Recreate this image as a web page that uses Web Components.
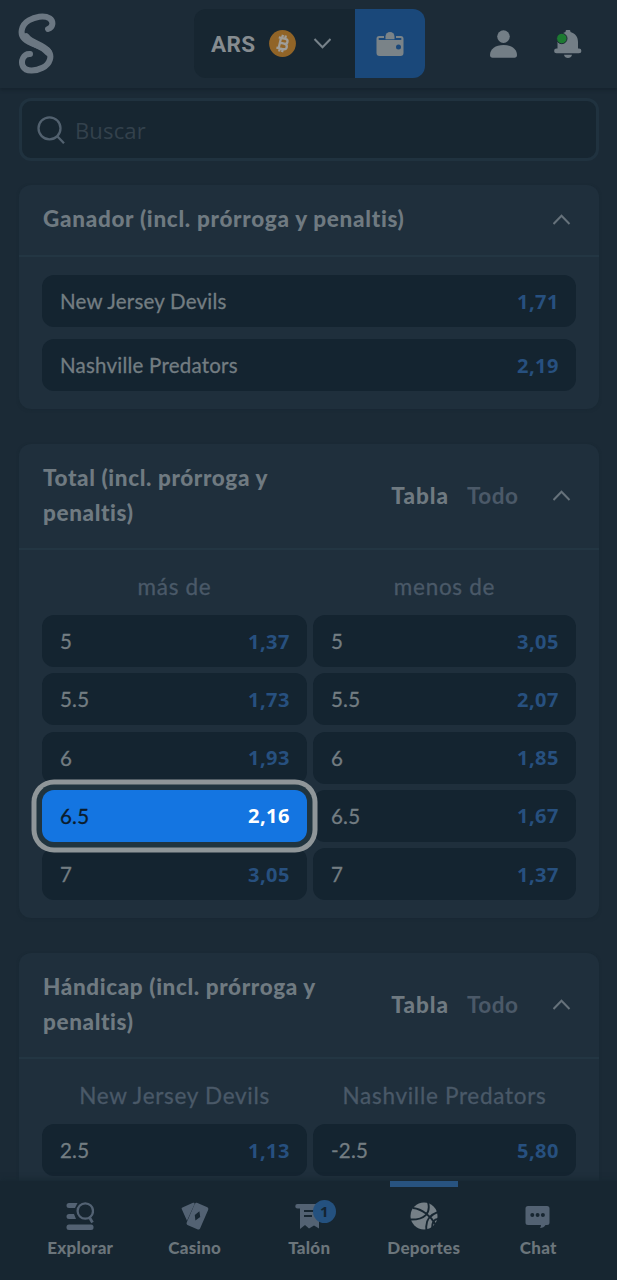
<!DOCTYPE html>
<html lang="es">
<head>
<meta charset="utf-8">
<meta name="viewport" content="width=device-width, initial-scale=1">
<title>Apuestas</title>
<style>
  body {
    margin: 0;
    background: #1b2a36;
    font-family: Lato, "Open Sans", sans-serif;
  }
</style>
</head>
<body>
<bet-app></bet-app>

<script>
const define = (name, html, setup) => {
  const template = document.createElement('template')
  template.innerHTML = html

  customElements.define(name,
    class extends HTMLElement {
      constructor () {
        super()

        this.attachShadow({ mode: 'open' })
          .appendChild(template.content.cloneNode(true))
      }

      connectedCallback () {
        if (setup) setup(this, this.shadowRoot)
      }
    })
}

define('bet-chevron', `
<style>
  :host { display: block; width: 18px; height: 18px; color: #66727b; }
  :host([down]) { transform: rotate(180deg); }
  svg { display: block; }
</style>
<svg width="18" height="18" viewBox="0 0 18 18" fill="none" stroke="currentColor" stroke-width="2"><path d="M.5 14 8.500 5.800l8 8.200"/></svg>
`)

define('bet-header', `
<style>
  :host {
    display: flex;
    align-items: center;
    box-sizing: border-box;
    height: 88px;
    padding: 0 35px 1px 18px;
    background: #1c2b37;
    box-shadow: 0 2px 3px #16232e;
    position: relative;
  }
  .logo { width: 38px; margin-right: 138px; }
  .wallet { display: flex; height: 69px; }
  .currency {
    display: flex;
    align-items: center;
    box-sizing: border-box;
    width: 161px;
    padding-left: 17px;
    border-radius: 12px 0 0 12px;
    background: #172631;
    color: #868c90;
    font: bold 22.500px Roboto, sans-serif;
  }
  .currency span { width: 58px; letter-spacing: .3px; }
  .currency bet-chevron { margin-left: 17px; color: #77828a; }
  .button {
    display: flex;
    align-items: center;
    justify-content: center;
    width: 70px;
    border-radius: 0 12px 12px 0;
    background: #1a487a;
  }
  .icons { display: flex; gap: 37px; margin-left: auto; }
  svg { display: block; }
</style>
<svg class="logo" width="38" height="62" viewBox="0 0 38 62" fill="none" stroke="#6b7782" stroke-linecap="round" stroke-linejoin="round">
  <path stroke-width="6" d="M30 16C35 14.500 36 8.500 31.500 5.300C26 1.800 16.500 4 11 7.300C3 12 1.500 21 6.500 26C12 31.500 23 32.500 29.500 37.500C35 42.500 32 51 24.500 54.800C17.500 58.500 8 59 5 53.500C2.300 48 5.500 40.500 12 41"/>
  <path stroke-width="7.500" d="M8 24C13 31 25 32 30 39"/>
</svg>
<div class="wallet">
  <div class="currency">
    <span>ARS</span>
    <svg width="27" height="27" viewBox="0 0 27 27">
      <circle cx="13.500" cy="13.500" r="13.400" fill="#916427"/>
      <g transform="rotate(13 13.500 13.500)" fill="none" stroke="#9f9d98" stroke-width="2.300">
        <path d="M8.500 8.300h6.700c3.700 0 3.700 5 0 5h-4.500M15 13.300c4.600 0 4.600 5.600 0 5.600H8.500M10.800 8v11M12 5v3M15 5v3M12 19v3M15 19v3"/>
      </g>
    </svg>
    <bet-chevron down></bet-chevron>
  </div>
  <div class="button">
    <svg width="28" height="26" viewBox="0 0 28 26">
      <path fill="#7a8388" fill-rule="evenodd" d="M3.500 5H8v2H3.500a1 1 0 0 0 0 2h21a1 1 0 0 0 0-2H20V5h4.500A2.500 2.500 0 0 1 27.500 7.500V22a3 3 0 0 1-3 3H3.500a3 3 0 0 1-3-3V7.500A2.500 2.500 0 0 1 3.500 5Zm19 8.500a2.500 2.500 0 1 0 0 5 2.500 2.500 0 0 0 0-5Z"/>
      <path fill="#7a8388" d="M9.500 8.300V5.500a4.500 4.500 0 1 1 9 0v2.800Z"/>
    </svg>
  </div>
</div>
<div class="icons">
  <svg width="27" height="28" viewBox="0 0 27 28" fill="#737e86">
    <circle cx="13.500" cy="6.600" r="6.300"/>
    <path d="M0 25c0-6 5.500-10 13.500-10S27 19 27 25c0 2-1 2.700-2.500 2.700h-22C1 27.700 0 27 0 25Z"/>
  </svg>
  <svg width="28" height="28" viewBox="0 0 28 28">
    <path fill="#737e86" d="M11.500 2a2.500 2.500 0 0 1 5 0c5 1.500 7.500 5 7.500 10v6.500h1a2.400 2.400 0 0 1 0 4.800H2.500a2.400 2.400 0 0 1 0-4.800h1V12c0-5 3-8.500 8-10ZM10 24.700h8c-.7 4.400-7.300 4.400-8 0Z"/>
    <circle cx="7.800" cy="8.500" r="5.200" fill="#1c7a31" stroke="#1c2b37" stroke-width="1"/>
  </svg>
</div>
`)

define('bet-search', `
<style>
  :host {
    display: flex;
    align-items: center;
    gap: 10px;
    box-sizing: border-box;
    height: 63px;
    padding: 0 0 0 15px;
    border: 3px solid #20323f;
    border-radius: 12px;
    background: #172631;
    color: #33414c;
    font: 22px "Open Sans", sans-serif;
    letter-spacing: .15px;
  }
</style>
<svg width="28" height="28" viewBox="0 0 28 28" fill="none" stroke="#52616f" stroke-width="2.300"><circle cx="12.500" cy="12.300" r="11"/><path d="m20.500 20.500 6.500 6.700"/></svg>
<span><slot></slot></span>
`)

define('bet-market', `
<style>
  :host {
    display: block;
    box-sizing: border-box;
    border-radius: 12px;
    background: #1f2f3c;
    box-shadow: 0 1px 3px #192833;
  }
  header {
    display: flex;
    align-items: center;
    box-sizing: border-box;
    padding: 16px 28.500px 18px 24px;
    border-bottom: 2px solid #233643;
  }
  h2 {
    flex: none;
    margin: 0;
    width: 290px;
    color: #6f7a81;
    font: 900 22.500px/35px Lato, sans-serif;
    letter-spacing: .62px;
  }
  :host([wide]) header { padding-bottom: 19px; }
  :host([wide]) h2 { width: 420px; letter-spacing: .7px; }
  nav { display: flex; gap: 18px; margin-left: auto; margin-right: 34px; font: 900 22.500px Lato, sans-serif; }
  nav span { color: #6f7a81; letter-spacing: 1px; }
  nav span + span { color: #4b5968; font-weight: bold; letter-spacing: .5px; }
  :host([wide]) nav { display: none; }
  bet-chevron { margin-left: auto; }
  nav + bet-chevron { margin-left: 0; }
  :host([wide]) bet-chevron { margin-left: auto; }
  .body { padding: 18px 23px; }
</style>
<header>
  <h2></h2>
  <nav><span>Tabla</span><span>Todo</span></nav>
  <bet-chevron></bet-chevron>
</header>
<div class="body"><slot></slot></div>
`, (host, root) => {
  root.querySelector('h2').textContent = host.getAttribute('heading')
})

define('bet-column', `
<style>
  :host { display: flex; flex-direction: column; gap: 6.250px; min-width: 0; }
  .label {
    height: 47px;
    margin-bottom: -6.250px;
    padding-top: 2px;
    box-sizing: border-box;
    text-align: center;
    color: #4a5968;
    font: 22.500px/34px Lato, sans-serif;
    letter-spacing: .7px;
    -webkit-text-stroke: .3px #4a5968;
  }
</style>
<div class="label"></div>
<slot></slot>
`, (host, root) => {
  root.querySelector('.label').textContent = host.getAttribute('label')
})

define('bet-outcome', `
<style>
  :host {
    display: flex;
    align-items: center;
    justify-content: space-between;
    box-sizing: border-box;
    height: 52px;
    padding: 0 17px 0 18px;
    border-radius: 12px;
    background: #142430;
    color: #737d82;
    font: 20.500px Lato, sans-serif;
    letter-spacing: .22px;
    -webkit-text-stroke: .3px currentColor;
  }
  .odds {
    color: #27507f;
    font: bold 20px "Open Sans", sans-serif;
    letter-spacing: .5px;
    -webkit-text-stroke: 0;
  }
  /* the ring overlaps its neighbours without moving them */
  :host([selected]) {
    position: relative;
    z-index: 1;
    background: #1475e1;
    color: #0b1c2c;
    box-shadow: 0 0 0 5.500px #20343f, 0 0 0 10.500px #8f9699;
  }
  :host([selected]) .odds { color: #fff; }
</style>
<span><slot></slot></span>
<span class="odds"></span>
`, (host, root) => {
  root.querySelector('.odds').textContent = host.getAttribute('odds')
})

define('bet-tab', `
<style>
  :host {
    display: flex;
    flex-direction: column;
    align-items: center;
    flex: 1;
    position: relative;
    padding-top: 20px;
    color: #6b757b;
    font: 900 17px/24px Lato, sans-serif;
    letter-spacing: .25px;
    --icon: #536273;
  }
  :host([active]) { --icon: #768087; }
  :host([active])::before {
    content: "";
    position: absolute;
    top: 0;
    width: 68px;
    height: 6px;
    background: #285380;
  }
  .icon { height: 30px; margin-bottom: 5px; display: flex; align-items: center; }
  .badge {
    position: absolute;
    top: 19px;
    left: 61px;
    width: 23px;
    border-radius: 50%;
    background: #24517f;
    color: #142431;
    font: bold 15px/23px "Open Sans", sans-serif;
    text-align: center;
  }
  .badge:empty { display: none; }
</style>
<div class="icon"><slot name="icon"></slot></div>
<slot></slot>
<div class="badge"></div>
`, (host, root) => {
  root.querySelector('.badge').textContent = host.getAttribute('count') || ''
})

define('bet-tabs', `
<style>
  :host {
    display: flex;
    box-sizing: border-box;
    width: 100%;
    height: 99px;
    padding: 0 21.500px 0 23px;
    background: #172631;
    box-shadow: 0 -2px 5px #182833;
    position: relative;
    z-index: 2;
  }
  svg { display: block; fill: var(--icon); }
</style>
<bet-tab>
  <svg slot="icon" width="28" height="28" viewBox="0 0 28 28">
    <path d="M3 1h8.500L9 6H3a2.500 2.500 0 0 1 0-5Zm0 11h5l2 5H3a2.500 2.500 0 0 1 0-5Z"/>
    <rect x=".5" y="22.500" width="27" height="5.500" rx="2.500"/>
    <g fill="none" stroke="var(--icon)" stroke-width="2.300"><circle cx="19.300" cy="9" r="7.700"/><path d="m23.500 15.500 3 5" stroke-width="2.800"/></g>
  </svg>Explorar
</bet-tab>
<bet-tab>
  <svg slot="icon" width="28" height="28" viewBox="0 0 28 28">
    <path d="M2.500 5 12 .8c1-.4 2 .2 1.500 1.400L6 18.800.7 7C.4 6 1 5.500 2.500 5Z"/>
    <path fill-rule="evenodd" d="m16.500.9 9.300 4c1.400.7 1.900 1.700 1.300 3l-7.800 18c-.6 1.400-1.700 1.900-3 1.300l-9.300-4c-1.400-.6-1.800-1.700-1.200-3l7.800-18c.6-1.300 1.600-1.900 2.900-1.300Zm1.900 8.300-4.600 3.800.6 5.600 4.800-3.600Z"/>
  </svg>Casino
</bet-tab>
<bet-tab count="1">
  <svg slot="icon" width="28" height="28" viewBox="0 0 28 28">
    <path fill-rule="evenodd" d="M2.500 2h23a2.200 2.200 0 0 1 0 4.500H24V26.500l-5-3-5 3-4-3.500-5 4V6.500H2.500a2.200 2.200 0 0 1 0-4.500ZM9 8v2h10V8Zm0 5v2h8v-2Z"/>
  </svg>Talón
</bet-tab>
<bet-tab active>
  <svg slot="icon" width="28" height="28" viewBox="0 0 28 28">
    <circle cx="14" cy="14" r="13.500"/>
    <path fill="none" stroke="#172631" stroke-width="1.900" d="M3 6c9 1 18 8 23 17M18 0c3 11-3 18-18 17.500M28 10c-8 3-13 9-11.500 18M28 17c-4 0-6 4-6 10"/>
  </svg>Deportes
</bet-tab>
<bet-tab>
  <svg slot="icon" width="28" height="28" viewBox="0 0 28 28">
    <path fill-rule="evenodd" d="M4 4h19a2.500 2.500 0 0 1 2.500 2.500v14A2.500 2.500 0 0 1 23 23h-1.500c-1 2-3 3-5.500 3 .8-1 1-2 .9-3H4a2.500 2.500 0 0 1-2.500-2.500v-14A2.500 2.500 0 0 1 4 4Zm4.300 7a2 2 0 1 0 0 4 2 2 0 0 0 0-4Zm5.300 0a2 2 0 1 0 0 4 2 2 0 0 0 0-4Zm5.300 0a2 2 0 1 0 0 4 2 2 0 0 0 0-4Z"/>
  </svg>Chat
</bet-tab>
`)

define('bet-app', `
<style>
  :host { display: flex; flex-direction: column; height: 1280px; overflow: hidden; }
  main {
    flex: 1;
    display: flex;
    flex-direction: column;
    min-height: 0;
    padding: 10px 18px 0 19px;
    overflow: hidden;
  }
  main > * { flex: none; }
  bet-market { margin-bottom: 35px; }
  bet-search { margin-bottom: 24px; }
  .list { display: grid; gap: 12px; }
  .table { display: grid; grid-template-columns: 265px 263px; gap: 6px; }
</style>
<bet-header></bet-header>
<main>
  <bet-search>Buscar</bet-search>
  <bet-market wide heading="Ganador (incl. prórroga y penaltis)">
    <div class="list">
      <bet-outcome odds="1,71">New Jersey Devils</bet-outcome>
      <bet-outcome odds="2,19">Nashville Predators</bet-outcome>
    </div>
  </bet-market>
  <bet-market heading="Total (incl. prórroga y penaltis)">
    <div class="table">
      <bet-column label="más de">
        <bet-outcome odds="1,37">5</bet-outcome>
        <bet-outcome odds="1,73">5.5</bet-outcome>
        <bet-outcome odds="1,93">6</bet-outcome>
        <bet-outcome odds="2,16" selected>6.5</bet-outcome>
        <bet-outcome odds="3,05">7</bet-outcome>
      </bet-column>
      <bet-column label="menos de">
        <bet-outcome odds="3,05">5</bet-outcome>
        <bet-outcome odds="2,07">5.5</bet-outcome>
        <bet-outcome odds="1,85">6</bet-outcome>
        <bet-outcome odds="1,67">6.5</bet-outcome>
        <bet-outcome odds="1,37">7</bet-outcome>
      </bet-column>
    </div>
  </bet-market>
  <bet-market heading="Hándicap (incl. prórroga y penaltis)">
    <div class="table">
      <bet-column label="New Jersey Devils">
        <bet-outcome odds="1,13">2.5</bet-outcome>
      </bet-column>
      <bet-column label="Nashville Predators">
        <bet-outcome odds="5,80">-2.5</bet-outcome>
      </bet-column>
    </div>
  </bet-market>
</main>
<bet-tabs></bet-tabs>
`)
</script>
</body>
</html>
